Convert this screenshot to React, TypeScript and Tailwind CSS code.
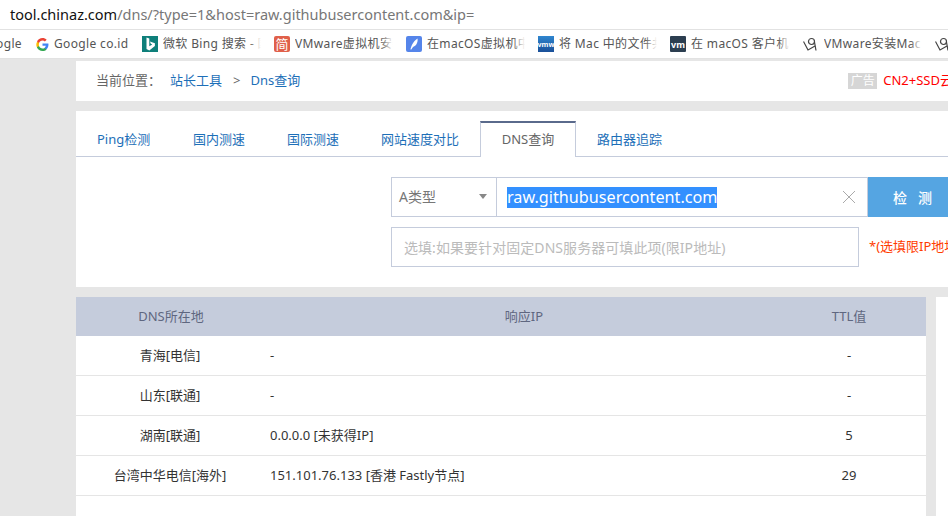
const sans = "font-['Noto_Sans','Noto_Sans_CJK_SC',sans-serif]";

const bookmarks = [
  { w: "w-[106px]", label: "Google co.id", icon: <GoogleIcon /> },
  { w: "w-[132px] pr-[13px]", label: "微软 Bing 搜索 - 国内版", icon: <BingIcon /> },
  { w: "w-[132px] pr-[13px]", label: "VMware虚拟机安装", icon: <JianIcon /> },
  { w: "w-[132px] pr-[13px]", label: "在macOS虚拟机中安装", icon: <FeatherIcon /> },
  { w: "w-[132px] pr-[13px]", label: "将 Mac 中的文件共享", icon: <VmwIcon /> },
  { w: "w-[133px] pr-[13px]", label: "在 macOS 客户机中", icon: <VmIcon /> },
  { w: "w-[132px] pr-[13px]", label: "VMware安装Mac OS", icon: <BirdIcon /> },
  { w: "w-[132px] pr-[13px]", label: "VMware", icon: <BirdIcon /> },
];

function GoogleIcon() {
  return (
    <svg viewBox="0 0 24 24" className="h-[13px] w-[13px] shrink-0">
      <path fill="#4285F4" d="M23 12.300c0-.9-.1-1.600-.2-2.300H12v4.400h6.200c-.3 1.400-1.100 2.600-2.300 3.400v2.800h3.700c2.100-2 3.400-4.900 3.400-8.300z" />
      <path fill="#34A853" d="M12 24c3.100 0 5.700-1 7.600-2.800l-3.700-2.800c-1 .7-2.300 1.100-3.900 1.100-3 0-5.500-2-6.400-4.700H1.800v2.900C3.700 21.400 7.500 24 12 24z" />
      <path fill="#FBBC05" d="M5.600 14.800c-.5-1.400-.5-3 0-4.500V7.400H1.800c-1.600 3.100-1.600 6.800 0 9.900l3.800-2.500z" />
      <path fill="#EA4335" d="M12 4.800c1.700 0 3.200.6 4.400 1.700l3.300-3.300C17.700 1.200 15.100 0 12 0 7.500 0 3.700 2.600 1.800 6.500l3.800 2.900C6.500 6.800 9 4.800 12 4.800z" />
    </svg>
  );
}

function BingIcon() {
  return (
    <div className="flex h-4 w-4 shrink-0 items-center justify-center bg-[#0e7f7a]">
      <svg viewBox="0 0 16 16" className="h-4 w-4">
        <path fill="#fff" d="M4.500 1.500l2.800 1v7.800l3-1.700-1.500-.8-.9-2.300 5 1.800v2.700L7.300 14.500l-2.800-1.600z" />
      </svg>
    </div>
  );
}

function JianIcon() {
  return (
    <div className="flex h-4 w-4 shrink-0 items-center justify-center rounded-[2px] bg-[#e0604a] text-[13px] leading-none text-white">
      简
    </div>
  );
}

function FeatherIcon() {
  return (
    <div className="flex h-4 w-4 shrink-0 items-center justify-center rounded-[2px] bg-[#5585ea]">
      <svg viewBox="0 0 16 16" className="h-4 w-4">
        <path fill="#fff" d="M4.500 13.500c.5-3 2.500-8 7-11 .5 3-.5 7-4.500 8.500L5.300 13.500z" />
      </svg>
    </div>
  );
}

function VmwIcon() {
  return (
    <div className="flex h-4 w-4 shrink-0 items-center justify-center bg-gradient-to-b from-[#2f86cf] to-[#1a4f98] text-[7px] font-bold leading-none text-white">
      vmw
    </div>
  );
}

function VmIcon() {
  return (
    <div className="flex h-4 w-4 shrink-0 items-center justify-center rounded-[1px] bg-[#2c3e50] text-[9px] font-bold leading-none text-white">
      vm
    </div>
  );
}

function BirdIcon() {
  return (
    <svg viewBox="0 0 16 16" className="h-4 w-4 shrink-0" fill="none" stroke="#444" strokeWidth="1.200">
      <path d="M0.500 5.500L5 14l7-4" />
      <circle cx="8.500" cy="5.500" r="3" />
      <path d="M11.500 6L13 14.500" />
    </svg>
  );
}

function Bookmark({ w, label, icon }: { w: string; label: string; icon: React.ReactNode }) {
  return (
    <div className={`flex ${w} shrink-0 items-center gap-[5px] overflow-hidden`}>
      {icon}
      <span className="relative min-w-0 flex-1 overflow-hidden whitespace-nowrap text-[12px] tracking-[0.35px] text-[#555]">
        {label}
        <span className="absolute right-0 top-0 h-full w-3 bg-gradient-to-r from-white/0 to-white" />
      </span>
    </div>
  );
}

const tabs = [
  { label: "Ping检测", w: "w-[117px] pl-[21px]" },
  { label: "国内测速", w: "w-[94px]" },
  { label: "国际测速", w: "w-[94px]" },
  { label: "网站速度对比", w: "w-[99px]" },
];

const rows = [
  { place: "青海[电信]", ip: "-", ttl: "-" },
  { place: "山东[联通]", ip: "-", ttl: "-" },
  { place: "湖南[联通]", ip: "0.0.0.0 [未获得IP]", ttl: "5" },
  { place: "台湾中华电信[海外]", ip: "151.101.76.133 [香港 Fastly节点]", ttl: "29" },
];

export default function App() {
  return (
    <div className={`h-[516px] w-[948px] overflow-hidden bg-[#e6e6e6] ${sans}`}>
      {/* browser */}
      <div className="flex h-[29px] items-center whitespace-nowrap bg-white pl-[10px] text-[14.500px]">
        <span className="text-[#111]">tool.chinaz.com</span>
        <span className="text-[#777]">/dns/?type=1&amp;host=raw.githubusercontent.com&amp;ip=</span>
      </div>
      <div className="flex h-[30px] items-center overflow-hidden border-y border-[#e2e2e2] bg-white">
        <div className="flex w-[22px] shrink-0 justify-end overflow-hidden whitespace-nowrap text-[12px] tracking-[0.35px] text-[#555]">
          Google
        </div>
        <div className="ml-[14px] flex">
          {bookmarks.map((b, i) => (
            <Bookmark key={i} {...b} />
          ))}
        </div>
      </div>

      <div className="pl-[76px] pt-[2px]">
        {/* breadcrumb */}
        <div className="flex h-[40px] items-center overflow-hidden whitespace-nowrap bg-white pl-5 text-[13px]">
          <span className="w-[74px] shrink-0 text-[#666]">当前位置：</span>
          <span className="text-[#1d6fb8]">站长工具</span>
          <span className="ml-[11px] text-[#666]">&gt;</span>
          <span className="ml-[10px] text-[#1d6fb8]">Dns查询</span>
          <span className="ml-[548px] flex h-[16px] w-[29px] shrink-0 items-center justify-center bg-[#d6d6d6] text-[12px] text-white">
            广告
          </span>
          <span className="ml-[6px] text-[13px] text-[#f00]">CN2+SSD云服务器</span>
        </div>

        {/* tool panel */}
        <div className="mt-[10px] h-[176px] bg-white">
          <div className="flex h-[46px] items-end border-b border-[#c5ccdc] pt-[10px]">
            {tabs.map((t) => (
              <div key={t.label} className={`flex h-[35px] items-center pt-[2px] text-[13px] text-[#1d6fb8] ${t.w}`}>
                {t.label}
              </div>
            ))}
            <div className="mb-[-1px] flex h-[36px] w-[96px] items-center justify-center border-x border-t-2 border-[#c5ccdc] border-t-[#5a6a8c] bg-white text-[13px] text-[#666]">
              DNS查询
            </div>
            <div className="flex h-[35px] items-center pl-[21px] pt-[2px] text-[13px] text-[#1d6fb8]">路由器追踪</div>
          </div>

          <div className="pl-[315px] pt-[20px]">
            <div className="flex h-[40px]">
              <div className="flex w-[106px] shrink-0 items-center justify-between border border-[#c5ccdc] pb-[1px] pl-[7px] pr-[9px] text-[14px] text-[#777]">
                A类型
                <span className="h-0 w-0 border-x-4 border-t-[5px] border-x-transparent border-t-[#888]" />
              </div>
              <div className="flex w-[371px] shrink-0 items-center justify-between border-y border-r border-[#c5ccdc] pl-[10px] pr-[11px]">
                <span className="flex h-[21px] items-center whitespace-nowrap bg-[#3390ff] text-[16.200px] text-white">
                  raw.githubusercontent.com
                </span>
                <svg viewBox="0 0 14 14" className="h-[14px] w-[14px]" stroke="#aaa" strokeWidth="1">
                  <path d="M1 1l12 12M13 1L1 13" />
                </svg>
              </div>
              <div className="flex w-[89px] shrink-0 items-center justify-center bg-[#55a5e2] text-[14px] font-medium text-white">
                检&nbsp;&nbsp;&nbsp;测
              </div>
            </div>
            <div className="mt-[10px] flex">
              <div className="flex h-[40px] w-[468px] shrink-0 items-center border border-[#c5ccdc] pl-[12px] text-[14px] tracking-[0.06px] text-[#bbb]">
                选填:如果要针对固定DNS服务器可填此项(限IP地址)
              </div>
              <div className="ml-[10px] flex items-center whitespace-nowrap text-[13px] text-[#ff3c00]">
                *(选填限IP地址)
              </div>
            </div>
          </div>
        </div>

        {/* results */}
        <div className="mt-[10px] flex">
          <div className="w-[850px] shrink-0 bg-white">
            <div className="flex h-[39px] items-center bg-[#c5ccdc] text-[13px] text-[#5f6780]">
              <div className="w-[190px] text-center">DNS所在地</div>
              <div className="w-[516px] text-center">响应IP</div>
              <div className="w-[134px] text-center">TTL值</div>
            </div>
            {rows.map((r) => (
              <div key={r.place} className="flex h-[40px] items-center border-b border-[#e5e5e5] text-[13px] text-[#333]">
                <div className="w-[188px] text-center">{r.place}</div>
                <div className="w-[518px] pl-[6px]">{r.ip}</div>
                <div className="w-[134px] text-center">{r.ttl}</div>
              </div>
            ))}
          </div>
          <div className="ml-[10px] h-[219px] flex-1 bg-white" />
        </div>
      </div>
    </div>
  );
}
